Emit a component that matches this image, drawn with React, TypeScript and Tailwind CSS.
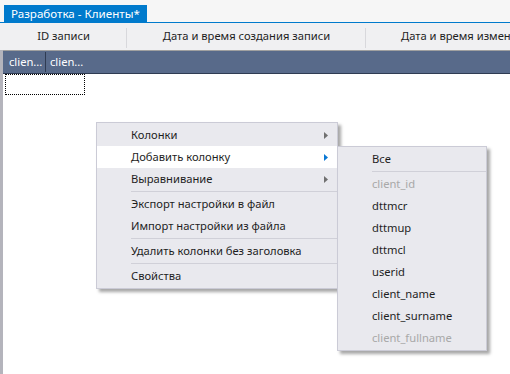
import { ReactNode } from "react"

const FONT = "font-['Segoe_UI','Noto_Sans',sans-serif]"

type Item = { label: string; sub?: boolean; active?: boolean; disabled?: boolean; sep?: boolean }

const mainItems: Item[] = [
  { label: "Колонки", sub: true },
  { label: "Добавить колонку", sub: true, active: true },
  { label: "Выравнивание", sub: true },
  { label: "", sep: true },
  { label: "Экспорт настройки в файл" },
  { label: "Импорт настройки из файла" },
  { label: "", sep: true },
  { label: "Удалить колонки без заголовка" },
  { label: "", sep: true },
  { label: "Свойства" },
]

const subItems: Item[] = [
  { label: "Все" },
  { label: "", sep: true },
  { label: "client_id", disabled: true },
  { label: "dttmcr" },
  { label: "dttmup" },
  { label: "dttmcl" },
  { label: "userid" },
  { label: "client_name" },
  { label: "client_surname" },
  { label: "client_fullname", disabled: true },
]

function Arrow({ active }: { active?: boolean }) {
  return (
    <svg width="4" height="7" viewBox="0 0 4 7" className="absolute right-[9px] top-[8px]">
      <path d="M0 0 L4 3.5 L0 7 Z" fill={active ? "#0a78d4" : "#707070"} />
    </svg>
  )
}

function Menu({ items, className }: { items: Item[]; className: string }) {
  return (
    <div
      className={`absolute border border-[#cbcbd6] bg-[#e9e9ee] py-[1px] shadow-[3px_3px_3px_rgba(0,0,0,0.35)] ${className}`}
    >
      {items.map((it, i) =>
        it.sep ? (
          <div key={i} className="flex h-[3px] items-center pl-[34px]">
            <div className="h-[1px] w-full bg-[#d0d0d8]" />
          </div>
        ) : (
          <div
            key={i}
            className={`relative flex h-[22px] items-center pl-[34px] text-[11.2px] ${
              it.active ? "bg-white" : ""
            } ${it.disabled ? "text-[#a8a8a8]" : "text-[#1e1e1e]"}`}
          >
            {it.label}
            {it.sub && <Arrow active={it.active} />}
          </div>
        )
      )}
    </div>
  )
}

function HeaderCell({ children, w }: { children: ReactNode; w: string }) {
  return (
    <div className={`relative flex h-full shrink-0 items-center ${w}`}>
      <span className="w-full text-center">{children}</span>
      <div className="absolute right-0 top-[5px] h-[20px] w-[1px] bg-[#d8d8dc]" />
    </div>
  )
}

export default function App() {
  return (
    <div className={`flex h-[374px] w-[510px] flex-col overflow-hidden bg-white ${FONT}`}>
      {/* document tab strip */}
      <div className="flex h-[22px] shrink-0 items-end bg-[#f6f6f6] pl-[4px]">
        <div className="flex h-[17px] items-center bg-[#007acc] px-[7px] text-[11.6px] leading-none text-white">
          Разработка - Клиенты*
        </div>
      </div>
      <div className="h-[1px] shrink-0 bg-[#007acc]" />

      {/* column header */}
      <div className="flex h-[27px] shrink-0 whitespace-nowrap bg-[#f0f0f2] text-[11.2px] text-[#1e1e1e]">
        <HeaderCell w="w-[127px]">ID записи</HeaderCell>
        <HeaderCell w="w-[239px]">Дата и время создания записи</HeaderCell>
        <div className="flex h-full shrink-0 items-center pl-[35px]">Дата и время изменения записи</div>
      </div>

      {/* grid */}
      <div className="flex flex-1 flex-col border-l-[3px] border-[#b4b4bc]">
        <div className="h-[1px] bg-[#a0a0a0]" />
        <div className="flex h-[23px] items-center border-b border-[#2f3b52] bg-[#586a8a] text-[11.2px] text-white">
          <div className="w-[42px] pl-[6px]">clien...</div>
          <div className="h-[20px] w-[1px] bg-[#2f3b52]" />
          <div className="pl-[4px]">clien...</div>
        </div>
        <div className="flex-1 bg-white pl-[2px]">
          <div className="h-[21px] w-[80px] border border-dotted border-black" />
        </div>
      </div>

      <Menu items={mainItems} className="left-[96px] top-[122px] w-[242px]" />
      <Menu items={subItems} className="left-[337px] top-[146px] w-[150px]" />
    </div>
  )
}
